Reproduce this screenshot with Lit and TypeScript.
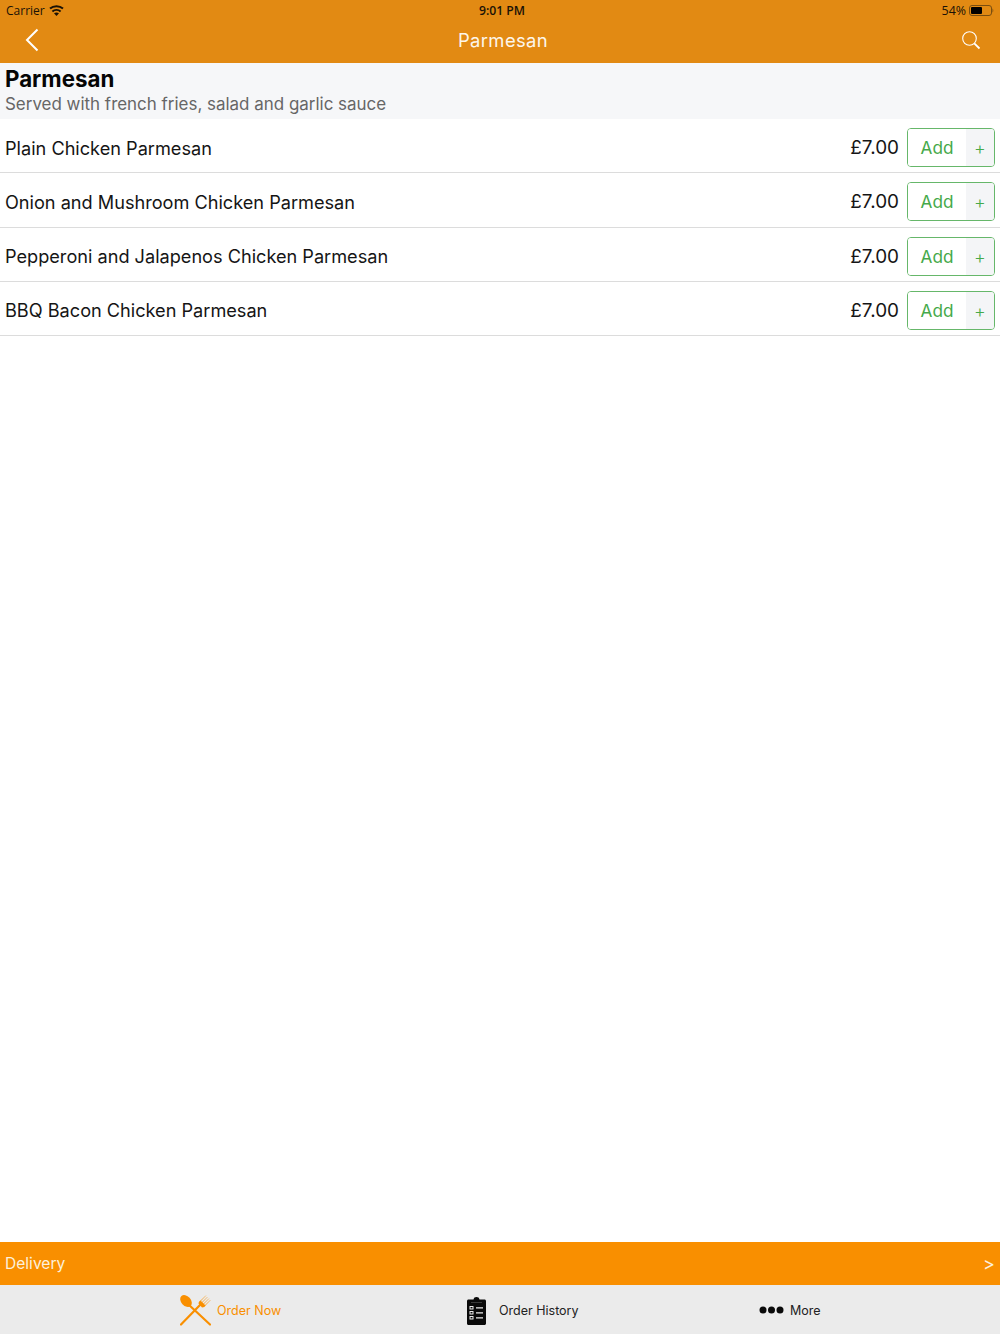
import { LitElement, html, css } from "lit";
import { customElement } from "lit/decorators.js";

const ITEMS = [
  "Plain Chicken Parmesan",
  "Onion and Mushroom Chicken Parmesan",
  "Pepperoni and Jalapenos Chicken Parmesan",
  "BBQ Bacon Chicken Parmesan",
];

@customElement("app-root")
export class AppRoot extends LitElement {
  static styles = css`
    :host {
      display: flex;
      flex-direction: column;
      height: 1334px;
      width: 1000px;
      overflow: hidden;
      font-family: Inter, "Open Sans", sans-serif;
      color: #111;
      background: #fff;
    }
    .top { background: #e28a13; height: 63px; flex: none; display: flex; flex-direction: column; }
    .status {
      height: 20px; display: grid; grid-template-columns: 1fr auto 1fr; align-items: center;
      padding: 0 6px; font-family: "Open Sans", sans-serif; font-size: 12px; color: #1a1206;
    }
    .st-left { display: flex; align-items: center; gap: 4px; }
    .st-time { font-weight: 600; font-size: 12.2px; position: relative; left: 2px; }
    .st-right { display: flex; justify-content: flex-end; align-items: center; gap: 3px; }
    .st-pct { font-size: 12.4px; }
    .nav { flex: 1; display: grid; grid-template-columns: 1fr auto 1fr; align-items: center; padding: 0 19px 3px 25px; color: #fff; }
    .nav-title { font-size: 18.4px; letter-spacing: 0.4px; color: #fdf6ea; }
    .nav-right { display: flex; justify-content: flex-end; }
    .nav svg { display: block; }
    .section { background: #f6f7f9; height: 56px; flex: none; padding: 3px 5px 0; box-sizing: border-box; }
    .section h1 { margin: 0; font-size: 22.3px; line-height: 26px; font-weight: 700; color: #050505; }
    .section p { margin: 2px 0 0; font-size: 16.95px; line-height: 21px; color: #666; }
    .list { flex: 1; }
    .row {
      height: 54.25px; box-sizing: border-box; display: flex; align-items: center;
      padding: 4px 5px 0; border-bottom: 1.5px solid #dcdcdc;
    }
    .name { flex: 1; font-size: 18.15px; color: #151515; }
    .price { font-size: 18.9px; margin-right: 8px; color: #151515; }
    .btn {
      width: 88px; height: 39px; box-sizing: border-box; border: 1px solid #66b76a; border-radius: 4px;
      display: flex; overflow: hidden; color: #45a94a;
    }
    .btn-add { width: 58px; text-align: center; font-size: 17.2px; line-height: 37px; background: #fff; }
    .btn-plus { flex: 1; background: #f4f5f7; text-align: center; font-size: 18px; font-weight: 300; line-height: 39px; }
    .delivery {
      flex: none; height: 43px; background: #f98f00; color: #fdf0dc; display: flex; align-items: center;
      justify-content: space-between; padding: 0 5px 0 5px; font-size: 15.6px;
    }
    .chev { font-size: 18px; }
    .tabs { flex: none; height: 49px; background: #ebebeb; display: grid; grid-template-columns: 287px 292px auto; align-items: center; padding: 0 180px; font-size: 12.5px; color: #222; }
    .tab { display: flex; align-items: center; }
    .tab span { padding-top: 2px; }
    .tab svg { display: block; flex: none; }
    .t1 { gap: 6px; color: #f98f00; }
    .t2 { gap: 13px; }
    .t2 svg { margin-top: 2px; }
    .t3 { gap: 6px; }
  `;

  render() {
    return html`
      <div class="top">
        <div class="status">
          <div class="st-left">
            <span>Carrier</span>
            <svg width="15" height="11" viewBox="0 0 15 11" fill="none" stroke="#1a1206" stroke-width="2">
              <path d="M1 3.6C4.6.4 10.4.4 14 3.6" />
              <path d="M3.4 6.400C5.700 4.400 9.300 4.400 11.600 6.400" />
              <path d="M5 8.300C6.400 7.100 8.600 7.100 10 8.300L7.500 11Z" fill="#1a1206" stroke="none" />
            </svg>
          </div>
          <div class="st-time">9:01 PM</div>
          <div class="st-right">
            <span class="st-pct">54%</span>
            <svg width="25" height="11" viewBox="0 0 25 11">
              <rect x=".5" y=".5" width="22" height="10" rx="2.5" fill="none" stroke="#7a4e10" />
              <rect x="2" y="2" width="11" height="7" rx="1" fill="#000" />
              <path d="M23.5 3.5c1 .3 1 3.700 0 4z" fill="#7a4e10" />
            </svg>
          </div>
        </div>
        <div class="nav">
          <svg width="14" height="24" viewBox="0 0 14 24" fill="none" stroke="#fff" stroke-width="2">
            <path d="M12.500 1.500L2 12l10.500 10.500" />
          </svg>
          <div class="nav-title">Parmesan</div>
          <div class="nav-right">
            <svg width="20" height="20" viewBox="0 0 20 20" fill="none" stroke="#fff" stroke-width="1.100">
              <circle cx="8.500" cy="8.500" r="6.800" />
              <path d="M13.300 13.300L18.500 18.500" stroke-width="1.800" />
            </svg>
          </div>
        </div>
      </div>
      <div class="section">
        <h1>Parmesan</h1>
        <p>Served with french fries, salad and garlic sauce</p>
      </div>
      <div class="list">
        ${ITEMS.map(
          (n) => html`
            <div class="row">
              <div class="name">${n}</div>
              <div class="price">£7.00</div>
              <div class="btn"><div class="btn-add">Add</div><div class="btn-plus">+</div></div>
            </div>
          `
        )}
      </div>
      <div class="delivery"><span>Delivery</span><span class="chev">&gt;</span></div>
      <div class="tabs">
        <div class="tab t1">
          <svg width="31" height="32" viewBox="0 0 31 32" fill="#f98f00" stroke="none">
            <defs>
              <linearGradient id="fade" gradientUnits="userSpaceOnUse" x1="20" y1="12" x2="29" y2="2">
                <stop offset="0" stop-color="#f98f00" />
                <stop offset="1" stop-color="#f98f00" stop-opacity="0.35" />
              </linearGradient>
            </defs>
            <ellipse cx="6" cy="7" rx="4.800" ry="6.800" transform="rotate(-42 6 7)" />
            <path d="M8 10L30 30.500" stroke="#f98f00" stroke-width="2.200" stroke-linecap="round" />
            <path d="M20 11L1 30.500" stroke="#f98f00" stroke-width="2.200" stroke-linecap="round" />
            <path d="M18.500 9.500C18.500 8 19.500 7 20.500 6.500L25.500 11.500C25 12.500 24 13.500 22 13.500Z" />
            <path d="M20 7.500L26 1.500M21.500 9L27.500 3M23 10.500L29 4.500M24.500 12L30.500 6" stroke="url(#fade)" stroke-width="1" fill="none" />
          </svg>
          <span>Order Now</span>
        </div>
        <div class="tab t2">
          <svg width="19" height="29" viewBox="0 0 19 29">
            <path d="M1.500 3.500H6.500C6.800 1.800 7.800 1 9.500 1S12.200 1.800 12.500 3.500H17.500C18.300 3.500 19 4.200 19 5V27.500C19 28.300 18.300 29 17.500 29H1.500C.7 29 0 28.300 0 27.500V5C0 4.200.7 3.500 1.500 3.500Z" fill="#0a0a0a" />
            <path d="M4 6.500H15" stroke="#3a3a3a" stroke-width="1" />
            <g fill="none" stroke="#ebebeb" stroke-width="1">
              <rect x="3" y="10.500" width="3" height="2.500" />
              <rect x="3" y="15.500" width="3" height="2.500" />
              <rect x="3" y="20.500" width="3" height="2.500" />
              <path d="M9 11.800h7M9 16.800h7M9 21.800h7" stroke-width="1.200" />
            </g>
          </svg>
          <span>Order History</span>
        </div>
        <div class="tab t3">
          <svg width="25" height="8" viewBox="0 0 25 8" fill="#0a0a0a">
            <circle cx="4" cy="4" r="3.500" /><circle cx="12.500" cy="4" r="3.500" /><circle cx="21" cy="4" r="3.500" />
          </svg>
          <span>More</span>
        </div>
      </div>
    `;
  }
}
